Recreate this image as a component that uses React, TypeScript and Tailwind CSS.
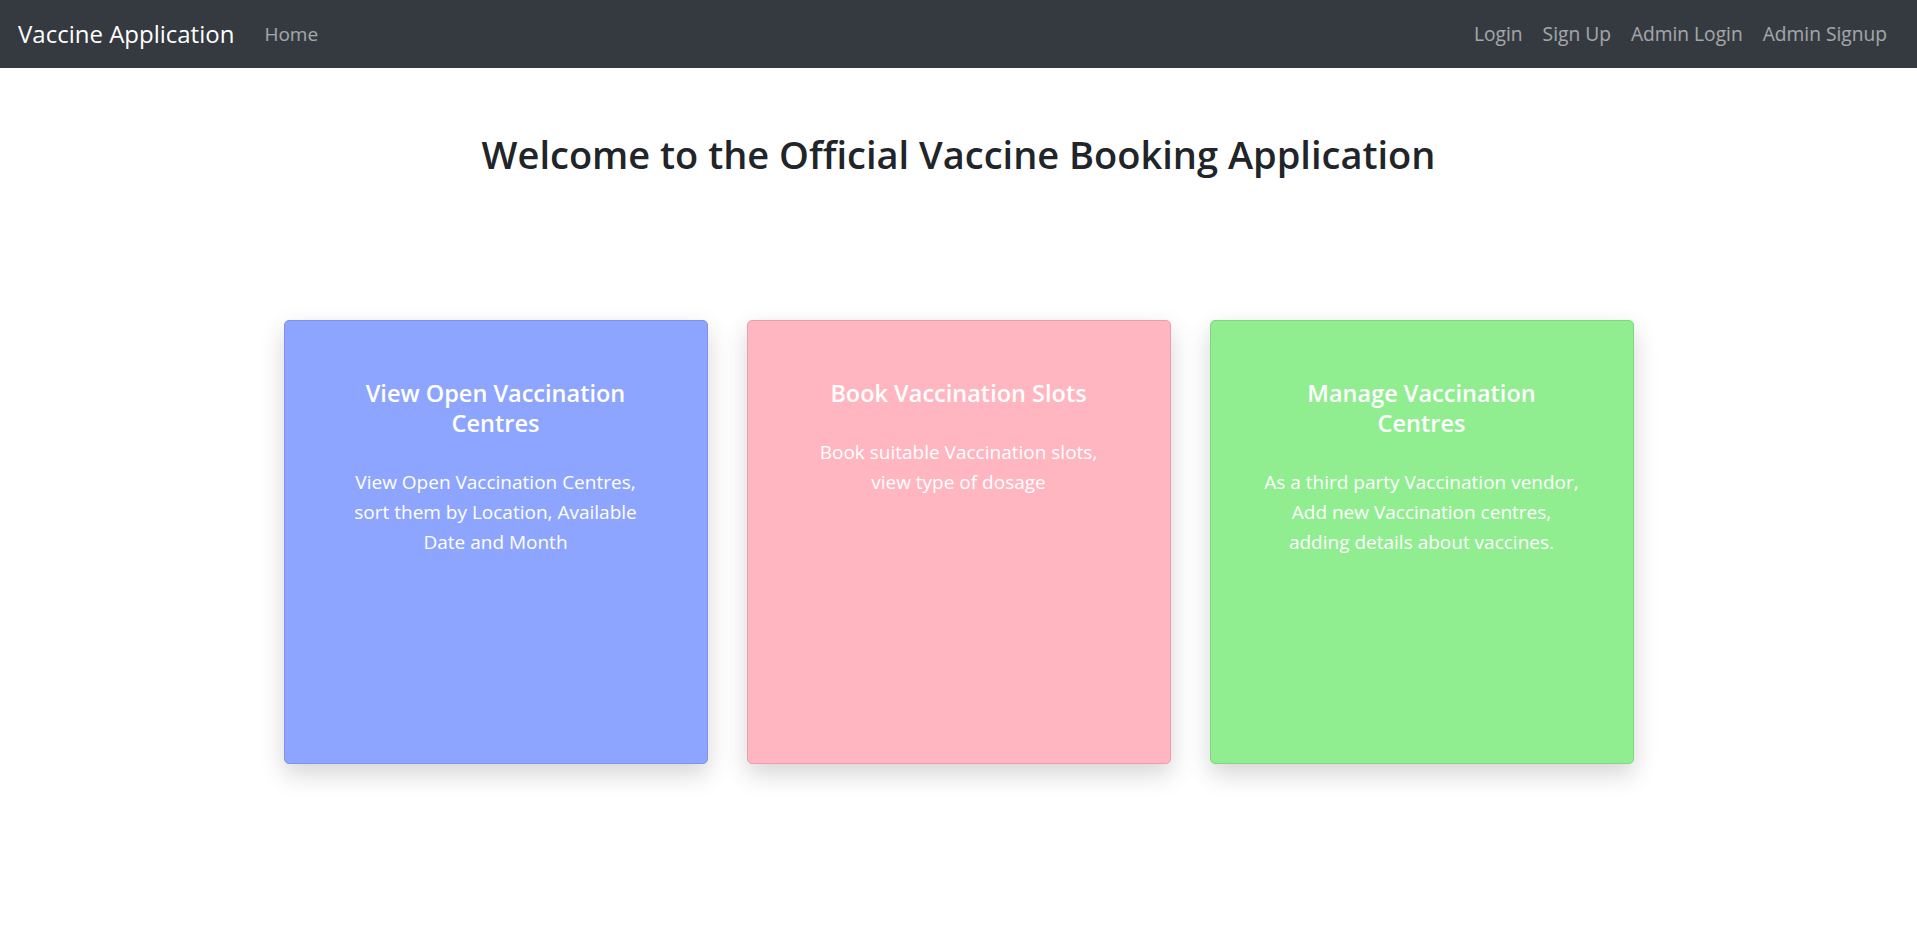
const cards = [
  {
    title: ['View Open Vaccination', 'Centres'],
    body: ['View Open Vaccination Centres,', 'sort them by Location, Available', 'Date and Month'],
    className: 'bg-[#8ea5ff] border-[#7f93ea]',
  },
  {
    title: ['Book Vaccination Slots'],
    body: ['Book suitable Vaccination slots,', 'view type of dosage'],
    className: 'bg-[#ffb6c1] border-[#eaa0ab]',
  },
  {
    title: ['Manage Vaccination', 'Centres'],
    body: ['As a third party Vaccination vendor,', 'Add new Vaccination centres,', 'adding details about vaccines.'],
    className: 'bg-[#90ee90] border-[#7fd87f]',
  },
]

export default function App() {
  return (
    <div className="min-h-screen bg-white font-['Open_Sans',sans-serif] text-[#212529]">
      <nav className="flex h-[68px] items-center justify-between bg-[#343a40] pl-[18px] pr-[30px]">
        <div className="flex items-center">
          <a href="#" className="text-[24px] text-white">
            Vaccine Application
          </a>
          <a href="#" className="ml-[30px] text-[19px] text-white/55">
            Home
          </a>
        </div>
        <div className="flex items-center gap-[20px] text-[19.2px] text-white/55">
          <a href="#">Login</a>
          <a href="#">Sign Up</a>
          <a href="#">Admin Login</a>
          <a href="#">Admin Signup</a>
        </div>
      </nav>

      <h1 className="mt-[64px] text-center text-[38px] font-semibold leading-[45px]">
        Welcome to the Official Vaccine Booking Application
      </h1>

      <div className="mt-[143px] flex justify-center gap-[39px]">
        {cards.map((card) => (
          <div
            key={card.title[0]}
            className={`h-[444px] w-[424px] rounded-[5px] border px-4 pt-[57px] text-center text-white shadow-[0_10px_24px_rgba(0,0,0,0.17)] ${card.className}`}
          >
            <h4 className="text-[23.5px] font-semibold leading-[30px]">
              {card.title.map((t) => (
                <div key={t}>{t}</div>
              ))}
            </h4>
            <p className="mt-[29px] text-[19px] leading-[30px]">
              {card.body.map((t) => (
                <span key={t} className="block whitespace-nowrap">
                  {t}
                </span>
              ))}
            </p>
          </div>
        ))}
      </div>
    </div>
  )
}
